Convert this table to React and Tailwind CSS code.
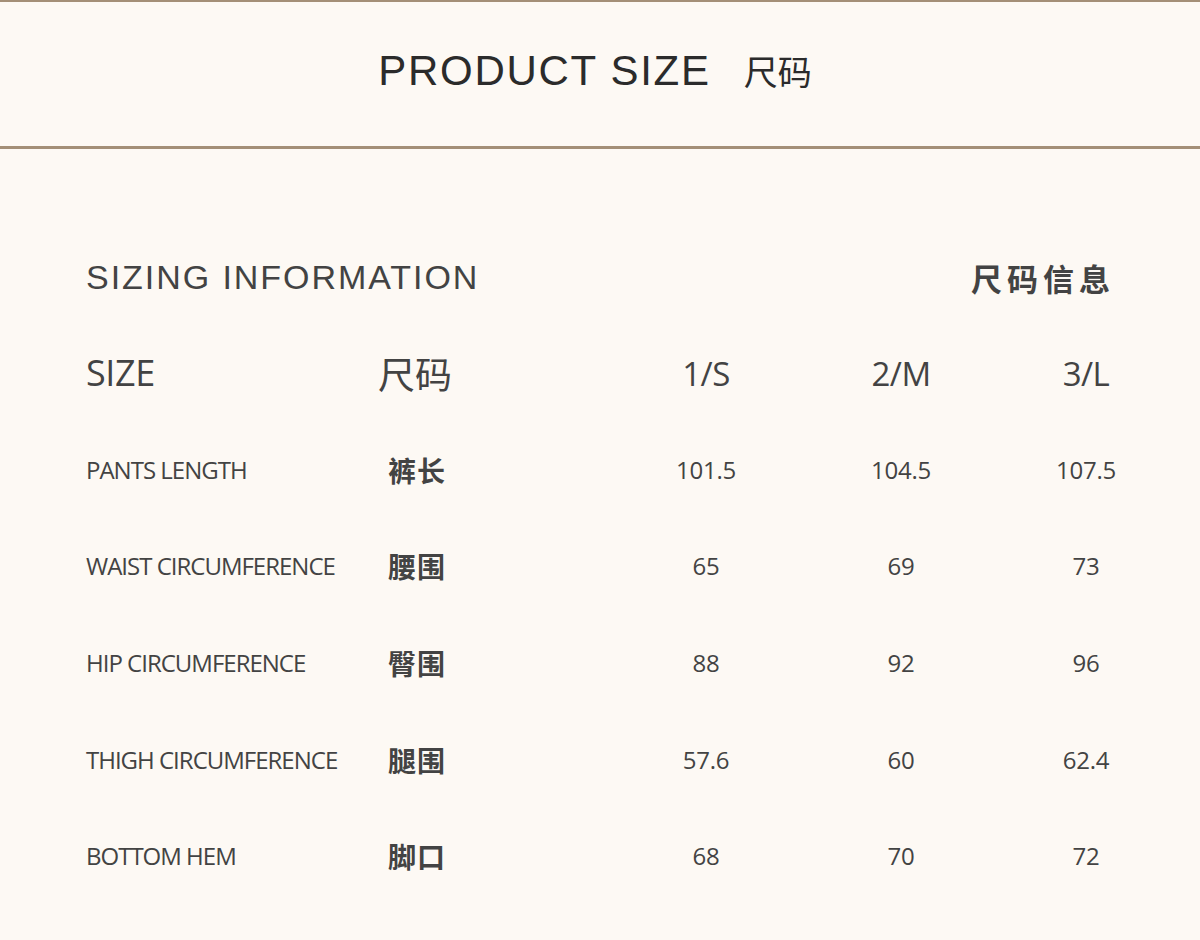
import React from "react";

const rows = [
  { en: "PANTS LENGTH", zh: "裤长", values: ["101.5", "104.5", "107.5"] },
  { en: "WAIST CIRCUMFERENCE", zh: "腰围", values: ["65", "69", "73"] },
  { en: "HIP CIRCUMFERENCE", zh: "臀围", values: ["88", "92", "96"] },
  { en: "THIGH CIRCUMFERENCE", zh: "腿围", values: ["57.6", "60", "62.4"] },
  { en: "BOTTOM HEM", zh: "脚口", values: ["68", "70", "72"] },
];

const sizes = ["1/S", "2/M", "3/L"];

const cjk = "font-['Noto_Sans_CJK_SC',sans-serif]";
const humanist = "font-['Open_Sans','Noto_Sans_CJK_SC',sans-serif]";

const App = () => {
  return (
    <div className="min-h-[940px] w-[1200px] bg-[#fdf9f4] text-[#434343]">
      {/* header */}
      <div className="border-t-2 border-b-[3px] border-[#a48f77] h-[149px] flex items-center justify-center pb-[6px] pr-[10px]">
        <span className="font-['Liberation_Sans',sans-serif] text-[42px] leading-none tracking-[1.7px] text-[#2b2b2b]">
          PRODUCT SIZE
        </span>
        <span className={`${cjk} ml-[33px] text-[34px] leading-none text-[#2b2b2b]`}>
          尺码
        </span>
      </div>

      <div className="pt-[103px] pl-[86px] pr-[85px] h-[50px] box-content flex items-center justify-between">
        <span className="font-['Liberation_Sans',sans-serif] text-[34px] leading-none tracking-[1.95px]">
          SIZING INFORMATION
        </span>
        <span className={`${cjk} text-[31px] font-bold leading-none tracking-[5px]`}>
          尺码信息
        </span>
      </div>

      <div className="mt-[23px] pl-[86px] grid grid-cols-[292px_238px_180px_210px_160px]">
        {/* column header */}
        <div className={`${humanist} h-[96.6px] flex items-center text-[36px] tracking-[-0.4px]`}>
          SIZE
        </div>
        <div className={`${cjk} h-[96.6px] flex items-center text-[37px]`}>尺码</div>
        {sizes.map((s) => (
          <div
            key={s}
            className={`${humanist} h-[96.6px] flex items-center justify-center text-[33px] tracking-[-0.5px]`}
          >
            {s}
          </div>
        ))}

        {rows.map((r) => (
          <React.Fragment key={r.en}>
            <div className={`${humanist} h-[96.6px] flex items-center text-[24px] tracking-[-1px]`}>
              {r.en}
            </div>
            <div className={`${cjk} h-[96.6px] flex items-center pl-[10px] text-[28px] font-bold tracking-[1px]`}>
              {r.zh}
            </div>
            {r.values.map((v, i) => (
              <div
                key={i}
                className={`${humanist} h-[96.6px] flex items-center justify-center text-[24px] tracking-[-0.2px]`}
              >
                {v}
              </div>
            ))}
          </React.Fragment>
        ))}
      </div>
    </div>
  );
};

export default App;
